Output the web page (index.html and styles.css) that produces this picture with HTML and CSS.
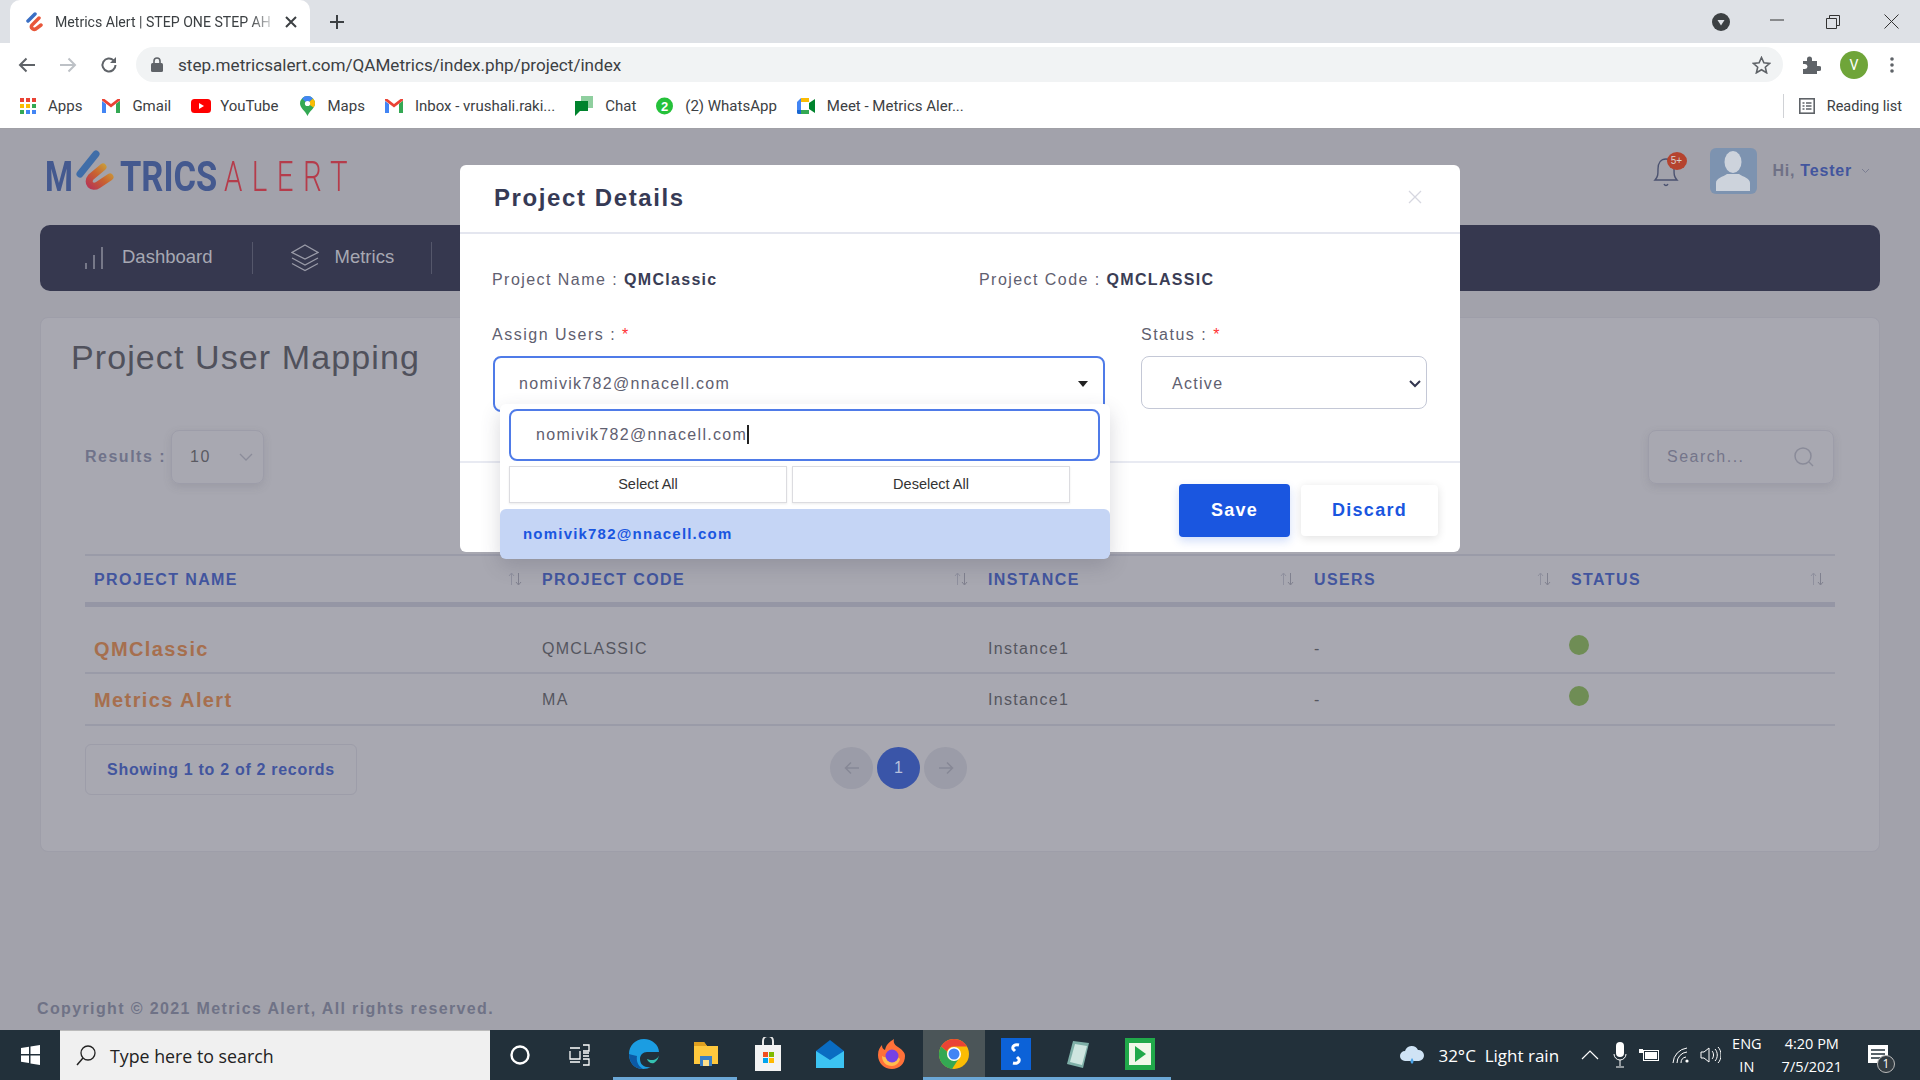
FILE: index.html

```html
<!doctype html>
<html>
<head>
<meta charset="utf-8">
<title>Metrics Alert | STEP ONE STEP AHEAD</title>
<link rel="stylesheet" href="styles.css">
</head>
<body>
<svg class="defs" width="0" height="0">
	<symbol id="gmail" viewBox="0 0 18 14">
		<path d="M0 2v12h4V5z" fill="#4285f4"/><path d="M18 2v12h-4V5z" fill="#34a853"/>
		<path d="M0 1.500 9 8.500l9-7V0h-2.500L9 5 2.500 0H0z" fill="#ea4335"/><path d="M14 5v9h4V2z" fill="#34a853"/>
	</symbol>
	<symbol id="sort" viewBox="0 0 14 14">
		<path d="M3.500 13V1.500M1 4l2.500-3L6 4" stroke="#8f909e" fill="none"/>
		<path d="M10.500 1v11.500M8 10l2.500 3 2.500-3" stroke="#80818f" fill="none"/>
	</symbol>
</svg>

<!-- browser -->
<div class="tabstrip">
	<div class="tab">
		<svg class="favicon" width="18" height="20" viewBox="0 0 18 20"><path d="M2 9 9 2" stroke="#3b6fc4" stroke-width="3.500" stroke-linecap="round" fill="none"/><path d="M13 6 6 13c-2 3 2 6 5 3l4-3" stroke="#e8573a" stroke-width="3.500" stroke-linecap="round" fill="none"/></svg>
		<span class="tab-title">Metrics Alert | STEP ONE STEP AH</span>
		<svg class="tab-close" width="12" height="12" viewBox="0 0 12 12"><path d="M1 1l10 10M11 1 1 11" stroke="#3c4043" stroke-width="2"/></svg>
	</div>
	<svg class="tab-new" width="16" height="16" viewBox="0 0 16 16"><path d="M8 1v14M1 8h14" stroke="#3c4043" stroke-width="2"/></svg>
	<div class="win-controls">
		<svg class="win-profile" width="18" height="18" viewBox="0 0 18 18"><circle cx="9" cy="9" r="9" fill="#3c4043"/><path d="M5.500 7h7L9 12.500z" fill="#dee1e6"/></svg>
		<svg class="win-min" width="14" height="2" viewBox="0 0 14 2"><path d="M0 1h14" stroke="#333"/></svg>
		<svg class="win-max" width="14" height="14" viewBox="0 0 14 14"><path d="M.5 3.500h10v10H.5zM3.500 3.500v-3h10v10h-3" stroke="#333" fill="none"/></svg>
		<svg class="win-close" width="15" height="15" viewBox="0 0 15 15"><path d="M.5.500l14 14M14.500.500l-14 14" stroke="#333"/></svg>
	</div>
</div>

<div class="toolbar">
	<svg width="18" height="16" viewBox="0 0 18 16"><path d="M17 8H2M8.500 1.500 2 8l6.500 6.500" stroke="#5f6368" stroke-width="2" fill="none"/></svg>
	<svg width="18" height="16" viewBox="0 0 18 16"><path d="M1 8h15M9.500 1.500 16 8l-6.500 6.500" stroke="#bdc1c6" stroke-width="2" fill="none"/></svg>
	<svg width="18" height="18" viewBox="0 0 18 18"><path d="M15.500 9A6.500 6.500 0 1 1 13.600 4.400" stroke="#5f6368" stroke-width="2" fill="none"/><path d="M16 1v6h-6z" fill="#5f6368"/></svg>
	<div class="omnibox">
		<svg width="12" height="15" viewBox="0 0 12 15"><path d="M3 6V4a3 3 0 0 1 6 0v2" stroke="#5f6368" stroke-width="1.600" fill="none"/><rect y="6" width="12" height="9" rx="1.500" fill="#5f6368"/></svg>
		<span class="url">step.metricsalert.com/QAMetrics/index.php/project/index</span>
		<svg class="star" width="19" height="18" viewBox="0 0 19 18"><path d="M9.500 1.500l2.400 5.300 5.700.6-4.300 3.800 1.300 5.600-5.100-3-5.100 3 1.300-5.600L1.400 7.400l5.700-.6z" stroke="#5f6368" stroke-width="1.600" fill="none"/></svg>
	</div>
	<svg class="puzzle" width="20" height="20" viewBox="0 0 20 20"><path d="M2 6h4V4a2.500 2.500 0 0 1 5 0v2h5v5h2a2.500 2.500 0 0 1 0 5h-2v3H2v-5h2a2.500 2.500 0 0 0 0-5H2z" fill="#5f6368"/></svg>
	<div class="avatar-chrome">V</div>
	<svg class="dots" width="4" height="16" viewBox="0 0 4 16"><circle cx="2" cy="2" r="1.800" fill="#5f6368"/><circle cx="2" cy="8" r="1.800" fill="#5f6368"/><circle cx="2" cy="14" r="1.800" fill="#5f6368"/></svg>
</div>

<div class="bookmarks">
	<a class="bm"><svg width="16" height="16" viewBox="0 0 16 16"><rect width="4" height="4" fill="#ea4335"/><rect x="6" width="4" height="4" fill="#ea4335"/><rect x="12" width="4" height="4" fill="#ea4335"/><rect y="6" width="4" height="4" fill="#fbbc04"/><rect x="6" y="6" width="4" height="4" fill="#fbbc04"/><rect x="12" y="6" width="4" height="4" fill="#34a853"/><rect y="12" width="4" height="4" fill="#34a853"/><rect x="6" y="12" width="4" height="4" fill="#4285f4"/><rect x="12" y="12" width="4" height="4" fill="#4285f4"/></svg>Apps</a>
	<a class="bm"><svg width="18" height="14"><use href="#gmail"/></svg>Gmail</a>
	<a class="bm bm-yt"><svg width="20" height="14" viewBox="0 0 20 14"><rect width="20" height="14" rx="3.500" fill="#f00"/><path d="M8 4l5 3-5 3z" fill="#fff"/></svg>YouTube</a>
	<a class="bm"><svg width="15" height="20" viewBox="0 0 15 20"><path d="M7.500 0A7.500 7.500 0 0 1 15 7.500c0 4.500-5 7-7.500 12.500C5 14.500 0 12 0 7.500A7.500 7.500 0 0 1 7.500 0z" fill="#34a853"/><path d="M2 2.500A7.500 7.500 0 0 1 13 2.500L7.500 7.500z" fill="#4285f4"/><path d="M13 2.500a7.500 7.500 0 0 1 2 5c0 1.500-.6 2.800-1.400 4L7.500 7.500z" fill="#fbbc04"/><circle cx="7.500" cy="7.500" r="2.600" fill="#fff"/></svg>Maps</a>
	<a class="bm"><svg width="18" height="14"><use href="#gmail"/></svg>Inbox - vrushali.raki...</a>
	<a class="bm"><svg width="18" height="20" viewBox="0 0 18 20"><path d="M6 0h12v12h-5V5H6z" fill="#8fcf9f"/><path d="M0 5h13v10H5l-5 5z" fill="#00832d"/></svg>Chat</a>
	<a class="bm"><svg width="17" height="18" viewBox="0 0 17 18"><circle cx="8.500" cy="9" r="8.500" fill="#25c13a"/><text x="8.500" y="13.500" class="wa-num">2</text></svg>(2) WhatsApp</a>
	<a class="bm"><svg width="18" height="16" viewBox="0 0 18 16"><path d="M4 0h8v4H4v8H0V4z" fill="#4285f4"/><path d="M4 0h8v4H4z" fill="#fbbc04"/><path d="M0 12h4v4H1.500A1.500 1.500 0 0 1 0 14.500z" fill="#1967d2"/><path d="M4 12h8v4H4z" fill="#34a853"/><path d="M12 5l6-4v14l-6-4z" fill="#00832d"/><rect x="4" y="4" width="8" height="8" fill="#fff"/></svg>Meet - Metrics Aler...</a>
	<a class="bm reading"><svg width="16" height="16" viewBox="0 0 16 16"><rect x=".8" y=".8" width="14.400" height="14.400" stroke="#5f6368" stroke-width="1.600" fill="none"/><path d="M3.500 5h2M7 5h5.500M3.500 8h2M7 8h5.500M3.500 11h2M7 11h5.500" stroke="#5f6368" stroke-width="1.300"/></svg>Reading list</a>
</div>

<!-- page under the modal -->
<div class="page">
	<div class="topbar">
		<div class="logo">
			<div class="logo-part logo-m"><span>M</span></div>
			<svg class="logo-mark" width="40" height="44" viewBox="0 0 40 44"><defs><linearGradient id="lg" x1="1" y1="0" x2="0" y2="1"><stop offset="0" stop-color="#c9a23c"/><stop offset=".5" stop-color="#c9622f"/><stop offset="1" stop-color="#b83a52"/></linearGradient></defs><path d="M4 24 20 4" stroke="#3f6da8" stroke-width="7" stroke-linecap="round" fill="none"/><path d="M27 17 15 27c-5 6 1 12 7 8l12-8" stroke="url(#lg)" stroke-width="7" stroke-linecap="round" fill="none"/></svg>
			<div class="logo-part logo-t"><span>TRICS</span></div>
			<div class="logo-part logo-a"><span>ALERT</span></div>
		</div>
		<div class="user">
			<div class="bell">
				<svg width="26" height="34" viewBox="0 0 26 34"><path d="M2 26c3-3 3-6 3-11 0-6 3-10 8-10s8 4 8 10c0 5 0 8 3 11z" stroke="#4b5270" stroke-width="1.400" fill="none"/><path d="M11 30c1 2 3 2 4 0" stroke="#4b5270" stroke-width="1.400" fill="none"/></svg>
				<span class="badge">5+</span>
			</div>
			<div class="user-pic">
				<svg width="34" height="40" viewBox="0 0 34 40"><ellipse cx="17" cy="11" rx="8.500" ry="11" fill="#cdd3dc"/><path d="M0 40V32c0-5 7-6 11-9h12c4 3 11 4 11 9v8z" fill="#cdd3dc"/></svg>
			</div>
			<span class="hi">Hi,</span> <span class="tester">Tester</span>
			<svg class="user-caret" width="9" height="6" viewBox="0 0 9 6"><path d="M1 1l3.500 3.500L8 1" stroke="#7b7e92" fill="none"/></svg>
		</div>
	</div>

	<div class="nav">
		<a class="nav-item nav-first">
			<svg width="18" height="24" viewBox="0 0 18 24"><path d="M1 23v-6M9 23V9M17 23V1" stroke="#9a9ba8" stroke-width="1.300"/></svg>
			<span>Dashboard</span>
		</a>
		<a class="nav-item nav-second">
			<svg width="28" height="28" viewBox="0 0 28 28"><path d="M14 1 27 8.500 14 15 1 8.500zM1 14l13 7 13-7M1 19.500l13 7 13-7" stroke="#9a9ba8" stroke-width="1.300" fill="none"/></svg>
			<span>Metrics</span>
		</a>
	</div>

	<div class="card">
		<h1 class="card-title">Project User Mapping</h1>
		<div class="filters">
			<label class="results">Results :</label>
			<div class="results-box"><span>10</span><svg width="14" height="9" viewBox="0 0 14 9"><path d="M1 1l6 6 6-6" stroke="#8b8c9a" stroke-width="1.300" fill="none"/></svg></div>
			<div class="search-box"><span>Search...</span><svg width="22" height="22" viewBox="0 0 22 22"><circle cx="10" cy="10" r="8" stroke="#8a8b99" stroke-width="1.500" fill="none"/><path d="M16 16l4 4" stroke="#8a8b99" stroke-width="1.500"/></svg></div>
		</div>
		<table class="grid">
			<thead>
				<tr>
					<th class="col1"><div class="th-in">PROJECT NAME<svg width="14" height="14"><use href="#sort"/></svg></div></th>
					<th class="col2"><div class="th-in">PROJECT CODE<svg width="14" height="14"><use href="#sort"/></svg></div></th>
					<th class="col3"><div class="th-in">INSTANCE<svg width="14" height="14"><use href="#sort"/></svg></div></th>
					<th class="col4"><div class="th-in">USERS<svg width="14" height="14"><use href="#sort"/></svg></div></th>
					<th class="col5"><div class="th-in">STATUS<svg width="14" height="14"><use href="#sort"/></svg></div></th>
				</tr>
			</thead>
			<tbody>
				<tr><td class="pname">QMClassic</td><td>QMCLASSIC</td><td>Instance1</td><td>-</td><td><i class="dot"></i></td></tr>
				<tr><td class="pname">Metrics Alert</td><td>MA</td><td>Instance1</td><td>-</td><td><i class="dot"></i></td></tr>
			</tbody>
		</table>
		<div class="grid-foot">
			<div class="showing">Showing 1 to 2 of 2 records</div>
			<div class="pager">
				<span class="pg pg-off"><svg width="16" height="14" viewBox="0 0 16 14"><path d="M15 7H2M7 1.500 1.500 7 7 12.500" stroke="#878896" stroke-width="1.500" fill="none"/></svg></span>
				<span class="pg pg-on">1</span>
				<span class="pg pg-off"><svg width="16" height="14" viewBox="0 0 16 14"><path d="M1 7h13M9 1.500 14.500 7 9 12.500" stroke="#878896" stroke-width="1.500" fill="none"/></svg></span>
			</div>
		</div>
	</div>
	<div class="copyright">Copyright © 2021 Metrics Alert, All rights reserved.</div>

	<!-- modal -->
	<div class="modal">
		<div class="modal-head">
			<h2>Project Details</h2>
			<svg width="14" height="14" viewBox="0 0 14 14"><path d="M1 1l12 12M13 1 1 13" stroke="#d6d7e0" stroke-width="1.300"/></svg>
		</div>
		<div class="modal-body">
			<div class="info-row">
				<div class="info info-name">Project Name : <b>QMClassic</b></div>
				<div class="info">Project Code : <b>QMCLASSIC</b></div>
			</div>
			<div class="form-row">
				<div class="field-users">
					<label>Assign Users : <em>*</em></label>
					<div class="multi"><span>nomivik782@nnacell.com</span><i class="caret"></i></div>
				</div>
				<div class="field-status">
					<label>Status : <em>*</em></label>
					<div class="status-select"><span>Active</span><svg width="12" height="8" viewBox="0 0 12 8"><path d="M1 1l5 5 5-5" stroke="#33364f" stroke-width="2" fill="none"/></svg></div>
				</div>
			</div>
		</div>
		<div class="modal-foot">
			<a class="btn btn-save">Save</a>
			<a class="btn btn-discard">Discard</a>
		</div>
	</div>

	<!-- open multiselect -->
	<div class="dropdown">
		<div class="dd-search">nomivik782@nnacell.com<i class="cursor"></i></div>
		<div class="dd-btns"><a>Select All</a><a>Deselect All</a></div>
		<div class="dd-item">nomivik782@nnacell.com</div>
	</div>
</div>

<!-- windows -->
<div class="taskbar">
	<svg class="tb-win" width="28" height="28" viewBox="0 0 28 28"><path d="M5 7l8-1.200V13H5zM14.500 5.600 24 4v9h-9.500zM5 14.500h8v7.500l-8-1.200zM14.500 14.500H24V24l-9.500-1.500z" fill="#fff"/></svg>
	<div class="tb-search">
		<svg width="24" height="24" viewBox="0 0 24 24"><circle cx="14" cy="9" r="7" stroke="#222" stroke-width="1.300" fill="none"/><path d="M9 14l-6 7" stroke="#222" stroke-width="1.500"/></svg>
		<span>Type here to search</span>
	</div>
	<svg class="tb-sys tb-cortana" width="22" height="22" viewBox="0 0 22 22"><circle cx="11" cy="11" r="8.500" stroke="#fff" stroke-width="2.400" fill="none"/></svg>
	<svg class="tb-sys" width="22" height="22" viewBox="0 0 22 22"><path d="M1 4h10M1 18h10M1 7v8h10V7M14 1h6v6h-6M14 9h6M14 12h6M14 15h6v6h-6" stroke="#fff" stroke-width="1.300" fill="none"/></svg>
	<div class="tb-apps">
		<span class="app open"><svg width="32" height="32" viewBox="0 0 32 32"><path d="M16 1C7 1 1 8 1 16c0 9 6 15 14 15 3 0 6-1 8-2-6 1-11-2-11-8 0-4 3-7 7-7h12C31 7 24 1 16 1z" fill="#1b9de2"/><path d="M31 16c0 4-4 6-7 6-2 0-4-.5-5-1 1 3 4 5 7 4 3-2 5-5 5-9z" fill="#35c1b1"/><path d="M1 16c0 9 6 15 14 15-5-3-7-8-6-13-3-1-6-1-8-2z" fill="#0c59a4"/></svg></span>
		<span class="app open"><svg width="30" height="30" viewBox="0 0 30 30"><path d="M3 3h10l3 4h11v18H3z" fill="#ffc83d"/><path d="M3 3h10l3 4H3z" fill="#e0a020"/><path d="M9 17h12v10H9z" fill="#3b7fc4"/><path d="M12 21h6v6h-6z" fill="#ffe08a"/></svg></span>
		<span class="app"><svg width="30" height="34" viewBox="0 0 30 34"><path d="M10 8V4a5 5 0 0 1 10 0v4" stroke="#e8e8e8" stroke-width="2" fill="none"/><rect x="2" y="8" width="26" height="26" fill="#f3f3f3"/><rect x="10" y="15" width="5" height="5" fill="#f25022"/><rect x="16" y="15" width="5" height="5" fill="#7fba00"/><rect x="10" y="21" width="5" height="5" fill="#00a4ef"/><rect x="16" y="21" width="5" height="5" fill="#ffb900"/></svg></span>
		<span class="app"><svg width="32" height="32" viewBox="0 0 32 32"><path d="M16 2 2 13v17h28V13z" fill="#0a6cc2"/><path d="M2 13v17h28V13L16 22z" fill="#3cc3f2"/></svg></span>
		<span class="app"><svg width="30" height="32" viewBox="0 0 30 32"><path d="M15 31C7 31 1 25 1 17 1 12 3 9 5 7c0 3 1 4 3 5 1-5 4-8 9-11-1 4 1 6 4 8 4 3 7 5 7 9 0 8-6 13-13 13z" fill="#ff7139"/><path d="M15 28c-6 0-10-4-10-10 3 2 6 1 8 0 4-1 8 0 10 3-1 4-4 7-8 7z" fill="#ffbd4f"/><circle cx="15" cy="18" r="6.500" fill="#7542e5"/></svg></span>
		<span class="app open active"><svg width="32" height="32" viewBox="0 0 32 32"><circle cx="16" cy="16" r="15" fill="#fbbc04"/><path d="M3 8.500A15 15 0 0 1 29 8.500H16a7.500 7.500 0 0 0-7 5z" fill="#ea4335"/><path d="M3 8.500A15 15 0 0 0 14 31l6.500-10a7.500 7.500 0 0 1-11.500-7.500z" fill="#34a853"/><circle cx="16" cy="16" r="7" fill="#fff"/><circle cx="16" cy="16" r="5.500" fill="#4285f4"/></svg></span>
		<span class="app open"><svg width="30" height="32" viewBox="0 0 30 32"><rect width="30" height="32" fill="#0c62d8"/><path d="M18 7c-4-1-7 1-6 4l2 2M12 25c4 1 7-1 6-4l-2-2" stroke="#fff" stroke-width="3" fill="none"/></svg></span>
		<span class="app open"><svg width="28" height="32" viewBox="0 0 28 32"><path d="M9 3 25 5 19 30 3 26z" fill="#7fb0a8"/><path d="M11 6 23 8 18 27 6 24z" fill="#cfe6e0"/></svg></span>
		<span class="app open"><svg width="30" height="32" viewBox="0 0 30 32"><rect width="30" height="32" fill="#21a94a"/><rect x="4" y="5" width="22" height="22" fill="#f2f8ea"/><path d="M10 8l11 8-11 8z" fill="#21a94a"/></svg></span>
	</div>
	<div class="tray">
		<svg width="26" height="24" viewBox="0 0 26 24"><path d="M6 18a5 5 0 0 1 0-10 7 7 0 0 1 13-1 5.500 5.500 0 0 1 1 11z" fill="#cfe3f5"/><path d="M13 15c2 3 2 4 0 6-2-2-2-3 0-6z" fill="#4aa3e8"/></svg>
		<span class="weather">32°C&nbsp; Light rain</span>
		<svg class="tray-up" width="18" height="10" viewBox="0 0 18 10"><path d="M1 9l8-8 8 8" stroke="#fff" stroke-width="1.200" fill="none"/></svg>
		<svg class="tray-mic" width="14" height="26" viewBox="0 0 14 26"><rect x="3" y="0" width="8" height="15" rx="4" fill="#fff"/><path d="M1 12a6 6 0 0 0 12 0M7 18v6M3 25h8" stroke="#fff" fill="none"/></svg>
		<svg class="tray-batt" width="20" height="14" viewBox="0 0 20 14"><rect x="4.500" y="2.500" width="15" height="10" stroke="#fff" fill="none"/><rect x="6" y="4" width="12" height="7" fill="#fff"/><path d="M0 1h4v4H0z" fill="#fff"/></svg>
		<svg class="tray-wifi" width="18" height="18" viewBox="0 0 18 18"><path d="M1 17A16 16 0 0 1 15 2M5 17A11 11 0 0 1 15 6M9 17a6 6 0 0 1 5-6" stroke="#fff" fill="none"/><circle cx="15" cy="15" r="1.600" fill="#fff"/></svg>
		<svg width="21" height="18" viewBox="0 0 21 18"><path d="M1 6h3l5-4v14l-5-4H1zM12 5c2 2 2 6 0 8M15 3c3 3 3 9 0 12M18 1c4 4 4 12 0 16" stroke="#fff" fill="none"/></svg>
		<div class="tray-lang"><span>ENG</span><span>IN</span></div>
		<div class="tray-time"><span>4:20 PM</span><span>7/5/2021</span></div>
		<div class="tray-note">
			<svg width="20" height="20" viewBox="0 0 20 20"><path d="M0 0h20v18H0z" fill="#fff"/><path d="M3 5h14M3 9h14M3 13h10" stroke="#22303a" stroke-width="1.300"/></svg>
			<span>1</span>
		</div>
	</div>
</div>
</body>
</html>
```

FILE: styles.css

```css
*{ margin:0; padding:0; box-sizing:border-box; list-style:none;}
html,body{ width:1920px; height:1080px; overflow:hidden;}
body{ display:flex; flex-direction:column; font-family:"Liberation Sans",Arial,sans-serif; background:#a2a2ab;}
.defs{ position:absolute;}
a{ text-decoration:none;}
svg{ display:block; flex:none;}

/* browser */
.tabstrip{ height:43px; background:#dee1e6; display:flex; align-items:center; padding-left:10px; font-family:Roboto,sans-serif;}
.tab{ width:300px; height:43px; background:#fff; border-radius:10px 10px 0 0; display:flex; align-items:center; padding:0 13px 0 16px;}
.favicon{ margin-right:11px;}
.tab-title{ flex:1; font-size:14.100px; color:#3c4043; white-space:nowrap; overflow:hidden; -webkit-mask-image:linear-gradient(to right,#000 88%,transparent);}
.tab-close{ margin-left:8px;}
.tab-new{ margin-left:19px;}
.win-controls{ margin-left:auto; display:flex; align-items:center; height:43px;}
.win-profile{ margin-right:40px;}
.win-min{ margin-right:42px; margin-bottom:4px;}
.win-max{ margin-right:44px;}
.win-close{ margin-right:21px;}

.toolbar{ height:43px; background:#fff; display:flex; align-items:center; padding-left:18px; gap:23px;}
.omnibox{ width:1647px; height:35px; margin-left:-5px; margin-right:-2px; background:#f1f3f4; border-radius:18px; display:flex; align-items:center; padding:0 12px 0 15px; font-family:Roboto,sans-serif;}
.url{ margin-left:15px; font-size:17.100px; color:#3c4043; flex:1;}
.puzzle{ margin-left:-3px;}
.avatar-chrome{ width:28px; height:28px; border-radius:50%; background:#6fa539; color:#fff; font:14px Roboto,sans-serif; text-align:center; line-height:28px; margin-left:-4px;}
.dots{ margin-left:-1px;}

.bookmarks{ height:43px; background:#fff; border-bottom:1px solid #a0a0a6; display:flex; align-items:center; padding:0 0 2px 20px; gap:20px; font:15px Roboto,sans-serif; color:#3c4043;}
.bm{ display:flex; align-items:center; gap:12px; color:#3c4043;}
.bm-yt{ gap:9px; margin-right:2px;}
.wa-num{ font:bold 13px "Liberation Sans",sans-serif; fill:#fff; text-anchor:middle;}
.reading{ margin-left:auto; border-left:1px solid #d0d2d6; height:24px; padding-left:15px; padding-right:18px; font-size:14.500px;}

/* page */
.page{ flex:1; position:relative; padding:0 40px; display:flex; flex-direction:column; background:#a2a2ab;}
.topbar{ height:96px; padding-bottom:12px; display:flex; align-items:center; justify-content:space-between; margin-right:-40px;}
.logo{ display:flex; align-items:center; margin:12px 0 0 5px; font:bold 42px/44px Roboto,sans-serif; white-space:nowrap;}
.logo-part span{ display:inline-block; transform-origin:left center;}
.logo-m{ width:28px; color:#44598f;}
.logo-m span{ transform:scaleX(.76);}
.logo-mark{ margin:-10px 0 0 3px; width:40px;}
.logo-t{ width:100px; margin-left:4px; color:#44598f;}
.logo-t span{ transform:scaleX(.82);}
.logo-a{ width:126px; margin-left:4px; font-weight:300; letter-spacing:13.500px; color:#b53c4b;}
.logo-a span{ transform:scaleX(.7);}
.user{ display:flex; align-items:center; margin-right:50px; font-size:16px; font-weight:bold; letter-spacing:.8px;}
.bell{ position:relative; margin-right:31px;}
.badge{ position:absolute; left:14px; top:-2px; width:20px; height:18px; border-radius:50%; background:#b5432e; color:#d8d0cc; font:10px/18px "Liberation Sans",sans-serif; text-align:center; letter-spacing:0;}
.user-pic{ width:47px; height:46px; background:#7d93b0; border-radius:6px; display:flex; align-items:flex-end; justify-content:center; padding-bottom:3px; margin-right:16px;}
.hi{ color:#6f7186; margin-right:5px;}
.tester{ color:#42559e; margin-right:9px;}

.nav{ height:66px; background:#36384f; border-radius:10px; display:flex; align-items:center; font-size:18.500px; flex:none;}
.nav-item{ height:32px; display:flex; align-items:center; gap:19px; color:#a7a8b3; padding:0 38px; border-right:1px solid #55576b;}
.nav-item span{ margin-top:-2px;}
.nav-first{ padding:0 39px 0 45px;}
.nav-second{ gap:16px; padding-right:37px;}

.card{ margin-top:26px; height:535px; background:#a8a8b1; border:1px solid #9e9ea9; border-radius:8px; padding:0 44px; flex:none;}
.card-title{ margin:17px 0 0 -14px; font-size:34px; line-height:44px; font-weight:normal; color:#50515c; letter-spacing:1.100px;}
.filters{ margin-top:51px; height:54px; display:flex; align-items:center; font-size:16px; letter-spacing:1.500px;}
.results{ font-weight:bold; color:#70738a; margin-right:5px;}
.results-box{ width:93px; height:54px; border:1px solid #9d9da9; border-radius:8px; display:flex; align-items:center; justify-content:space-between; padding:0 10px 0 18px; color:#5a5a62; box-shadow:0 3px 8px rgba(80,80,95,.15);}
.search-box{ margin-left:auto; width:186px; height:54px; border:1px solid #9d9da9; border-radius:8px; display:flex; align-items:center; justify-content:space-between; padding:0 18px; color:#74758a; box-shadow:0 3px 8px rgba(80,80,95,.15); margin-right:1px;}
.grid{ margin-top:70px; width:1750px; border-collapse:collapse; table-layout:fixed; border-top:2px solid #9a9ba8;}
.col1{ width:448px;}
.col2{ width:446px;}
.col3{ width:326px;}
.col4{ width:257px;}
.col5{ width:273px;}
.grid th{ height:49px; text-align:left; color:#42559e; font-size:16px; letter-spacing:1.400px; border-bottom:5px solid #9596a5; padding:2px 11px 0 9px;}
.th-in{ display:flex; align-items:center; justify-content:space-between;}
.th-in svg{ margin-top:-2px;}
.grid td{ height:52px; padding:2px 9px 0; font-size:16px; letter-spacing:1.300px; color:#55565f; border-bottom:2px solid #9a9ba8; vertical-align:middle;}
.grid tbody tr:first-child td{ height:69px; padding-top:20px;}
.grid td.pname{ font-size:20px; font-weight:bold; letter-spacing:1.400px; color:#a66f4e;}
.dot{ display:block; width:20px; height:20px; border-radius:50%; background:#6f8d55; margin:-9px 0 0 -2px;}
.grid-foot{ display:flex; align-items:center; margin-top:18px;}
.showing{ width:272px; height:51px; border:1px solid #9d9da9; border-radius:6px; color:#42559e; font-size:16px; font-weight:bold; letter-spacing:.7px; line-height:49px; text-align:center;}
.pager{ margin-left:473px; display:flex; gap:4px; align-items:center; margin-top:-3px;}
.pg{ width:43px; height:42px; border-radius:50%; display:flex; align-items:center; justify-content:center; font-size:16px;}
.pg-off{ background:#9b9ca8;}
.pg-on{ background:#3a55a8; color:#b8c0dc;}
.copyright{ margin:148px 0 0 -3px; font-size:16px; font-weight:bold; letter-spacing:1.370px; color:#6f7286;}

/* modal */
.modal{ position:absolute; left:460px; top:36px; width:1000px; height:387px; background:#fff; border-radius:6px; display:flex; flex-direction:column;}
.modal-head{ height:69px; border-bottom:2px solid #e4e6ef; display:flex; align-items:center; justify-content:space-between; padding:0 38px 2px 34px; flex:none;}
.modal-head svg{ margin-top:-2px;}
.modal-head h2{ font-size:24px; color:#363a55; letter-spacing:1.600px;}
.modal-body{ height:227px; padding:0 33px 0 32px; flex:none;}
.info-row{ display:flex; padding-top:36px; font-size:16px; letter-spacing:1.450px; color:#5f6070; line-height:20px;}
.info b{ color:#3a3d55; letter-spacing:1.300px;}
.info-name{ width:487px;}
.form-row{ display:flex; margin-top:35px;}
.form-row label{ display:block; font-size:16px; letter-spacing:1.500px; color:#5f6070; line-height:20px; margin-bottom:11px;}
.form-row em{ color:#f33; font-style:normal;}
.field-users{ width:649px;}
.multi{ width:612px; height:56px; margin-left:1px; border:2px solid #4f7be8; border-radius:8px; display:flex; align-items:center; justify-content:space-between; padding:0 15px 0 24px; font-size:16px; letter-spacing:1.300px; color:#5f6070;}
.caret{ width:0; height:0; border:5px solid transparent; border-top:6px solid #222; border-bottom:0;}
.status-select{ width:286px; height:53px; border:1px solid #c4c8d6; border-radius:8px; display:flex; align-items:center; justify-content:space-between; padding:2px 5px 0 30px; font-size:16px; letter-spacing:1.300px; color:#5f6070;}
.modal-foot{ flex:1; border-top:2px solid #e8eaf2; display:flex; align-items:center; padding:6px 22px 0 0; justify-content:flex-end; gap:11px;}
.btn{ height:53px; border-radius:4px; font-size:18px; font-weight:bold; letter-spacing:1.300px; display:flex; align-items:center; justify-content:center;}
.btn-save{ width:111px; background:#1a56e0; color:#fff; box-shadow:0 4px 10px rgba(26,86,224,.2);}
.btn-discard{ width:137px; height:51px; background:#fff; color:#1a56e0; box-shadow:0 2px 10px rgba(0,0,0,.12);}

/* dropdown */
.dropdown{ position:absolute; left:500px; top:275px; width:610px; height:154px; background:#fff; border-radius:6px; box-shadow:0 8px 20px rgba(60,60,80,.2);}
.dd-search{ margin:5px 10px 0 9px; height:52px; border:2px solid #4f7be8; border-radius:8px; padding-left:25px; line-height:48px; font-size:16px; letter-spacing:1.300px; color:#5f6070;}
.cursor{ display:inline-block; width:2px; height:19px; background:#222; vertical-align:-4px;}
.dd-btns{ display:flex; gap:5px; margin:5px 0 0 9px;}
.dd-btns a{ width:278px; height:37px; border:1px solid #dcdce0; font-size:14.500px; line-height:35px; text-align:center; color:#333; box-shadow:0 1px 2px rgba(0,0,0,.08);}
.dd-item{ margin-top:6px; height:50px; background:#c5d5f5; border-radius:6px; padding-left:23px; line-height:50px; font-size:15px; font-weight:bold; letter-spacing:1.200px; color:#1a56e0;}

/* taskbar */
.taskbar{ height:50px; flex:none; background:#22303a; display:flex; align-items:center; color:#fff; font-family:"Open Sans",sans-serif;}
.tb-win{ margin-left:16px;}
.tb-search{ margin-left:16px; width:430px; height:50px; background:#f0f0f0; border-top:1px solid #bbb; display:flex; align-items:center; padding-left:14px; gap:12px; color:#222; font-size:17.800px;}
.tb-sys{ margin-left:19px;}
.tb-sys + .tb-sys{ margin-left:38px;}
.tb-apps{ display:flex; margin-left:22px;}
.app{ width:62px; height:50px; display:flex; align-items:center; justify-content:center; border-bottom:3px solid transparent;}
.app.open{ border-bottom-color:#6ba7d6;}
.app.active{ background:#4b5558;}
.tray{ margin-left:auto; display:flex; align-items:center; height:50px; gap:10px; font-size:17px; padding-right:32px;}
.weather{ margin-left:3px; margin-right:12px;}
.tray-up{ margin-right:6px;}
.tray-mic{ margin-left:-2px;}
.tray-batt{ margin-left:2px;}
.tray-wifi{ margin-left:3px;}
.tray-lang,.tray-time{ display:flex; flex-direction:column; align-items:center; font-size:14.500px; line-height:23px;}
.tray-lang{ margin-left:1px;}
.tray-time{ margin-left:10px; margin-right:16px;}
.tray-note{ position:relative;}
.tray-note span{ position:absolute; left:9px; top:10px; width:18px; height:18px; border-radius:50%; background:#333c42; border:1px solid #bbb; font-size:12px; line-height:16px; text-align:center;}
```
